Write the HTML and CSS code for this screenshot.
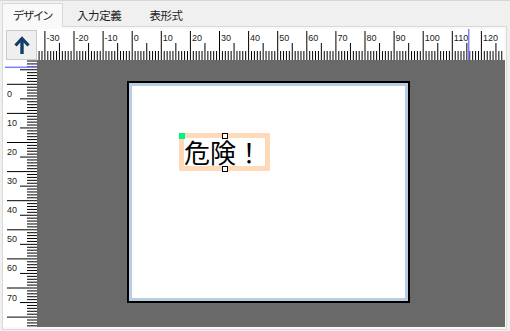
FILE: index.html
```html
<!DOCTYPE html>
<html lang="ja">
<head>
    <meta charset="UTF-8">
    <title>デザイン</title>
    <link rel="stylesheet" href="styles.css">
</head>
<body>
    <div class="window">
        <div class="tabs">
            <div class="tab active">デザイン</div>
            <div class="tab">入力定義</div>
            <div class="tab">表形式</div>
        </div>

        <div class="panel">
            <div class="designer">
                <button class="up-btn" title="上へ">
                    <svg width="16" height="18" viewBox="0 0 16 18">
                        <polyline points="1.5,9.5 8,2.5 14.5,9.5" fill="none" stroke="#123c69" stroke-width="3.2" stroke-linejoin="miter"/>
                        <line x1="8" y1="3" x2="8" y2="18" stroke="#123c69" stroke-width="3.4"/>
                    </svg>
                </button>
                <svg class="ruler ruler-h" id="ruler-h" width="467" height="31"></svg>
                <svg class="ruler ruler-v" id="ruler-v" width="34" height="267"></svg>

                <!-- 用紙 -->
                <div class="canvas">
                    <div class="paper">
                        <div class="sheet">
                            <div class="item">
                                <div class="item-text">危険！</div>
                                <span class="handle anchor"></span>
                                <span class="handle mid-top"></span>
                                <span class="handle mid-bottom"></span>
                            </div>
                        </div>
                    </div>
                </div>
            </div>
        </div>
    </div>

    <script>
        const NS = 'http://www.w3.org/2000/svg';
        const SCALE = 2.91;

        function el(svg, tag, attrs, text) {
            const node = document.createElementNS(NS, tag);
            for (const k in attrs) node.setAttribute(k, attrs[k]);
            if (text) node.textContent = text;
            svg.appendChild(node);
        }

        // horizontal ruler
        const rh = document.getElementById('ruler-h');
        for (let v = -33; v <= 128; v++) {
            const x = 95.2 + v * SCALE;
            if (x < 0 || x > 467) continue;
            let y1 = 22;
            if (v % 10 === 0) y1 = 2;
            else if (v % 5 === 0) y1 = 14;
            el(rh, 'line', { x1: x, y1: y1, x2: x, y2: 31, class: 'tick' });
            if (v % 10 === 0 && x + 14 < 467) el(rh, 'text', { x: x + 1.5, y: 11.5, class: 'label' }, String(v));
        }
        el(rh, 'line', { x1: 431.7, y1: 0, x2: 431.7, y2: 31, class: 'cursor' });

        // vertical ruler
        const rv = document.getElementById('ruler-v');
        for (let v = -9; v <= 83; v++) {
            const y = 24.3 + v * SCALE;
            if (y < 0 || y > 267) continue;
            let x1 = 24;
            if (v % 10 === 0) x1 = 4;
            else if (v % 5 === 0) x1 = 17;
            el(rv, 'line', { x1: x1, y1: y, x2: 34, y2: y, class: 'tick' });
            if (v % 10 === 0 && y + 13 < 267) el(rv, 'text', { x: 4, y: y + 12.5, class: 'label' }, String(v));
        }
        el(rv, 'line', { x1: 2, y1: 7.3, x2: 34, y2: 7.3, class: 'cursor' });
    </script>
</body>
</html>
```

FILE: styles.css
```css
* {
    margin: 0;
    padding: 0;
    box-sizing: border-box;
}

body {
    width: 510px;
    height: 331px;
    overflow: hidden;
    background: #f0f0f0;
    font-family: "Noto Sans CJK JP", "Noto Sans", sans-serif;
    color: #1e1e1e;
}

.window {
    border-top: 1px solid #d6d6d6;
}

.tabs {
    display: flex;
    align-items: flex-start;
    height: 23px;
    margin-top: 2px;
    padding-left: 2px;
}

.tab {
    height: 23px;
    padding: 0 13px;
    border: 1px solid transparent;
    border-bottom: none;
    font-size: 11.5px;
    line-height: 22px;
    letter-spacing: -0.4px;
    font-feature-settings: "palt";
}

.tab.active {
    position: relative;
    z-index: 1;
    width: 61px;
    height: 24px;
    padding: 0;
    text-align: center;
    letter-spacing: -0.8px;
    background: #f9f9f9;
    border-color: #d9d9d9;
}

.panel {
    width: 505px;
    height: 304px;
    margin-left: 2px;
    padding: 2px 1px 2px 0;
    background: #f9f9f9;
    border: 1px solid #d9d9d9;
}

.designer {
    display: grid;
    grid-template-columns: 34px 1fr;
    grid-template-rows: 31px 1fr;
    height: 100%;
}

.up-btn {
    width: 31px;
    height: 30px;
    margin: 1px 0 0 3px;
    display: flex;
    align-items: center;
    justify-content: center;
    background: #efefef;
    border: 1px solid #cbcbcb;
}

.ruler {
    display: block;
    background: #fff;
}

.ruler .tick {
    stroke: #000;
    stroke-width: 1;
}

.ruler .label {
    font-family: "Liberation Sans", Arial, sans-serif;
    font-size: 9px;
    fill: #222;
}

.ruler .cursor {
    stroke: #7f7fff;
    stroke-width: 1.5;
}

.canvas {
    background: #696969;
    padding: 21px 0 0 90px;
    overflow: hidden;
}

.paper {
    width: 283px;
    height: 222px;
    padding: 3px;
    background: #b8cce4;
    border: 2px solid #000;
}

.sheet {
    position: relative;
    height: 100%;
    background: #fff;
}

.item {
    position: absolute;
    left: 47px;
    top: 47px;
    padding: 5px;
    background: #ffdab9;
}

.item-text {
    width: 81px;
    height: 28px;
    background: #fff;
    font-size: 26px;
    line-height: 28px;
    color: #000;
    white-space: nowrap;
}

.handle {
    position: absolute;
    width: 6px;
    height: 6px;
}

.handle.anchor {
    left: 0;
    top: 0;
    background: #00f57f;
}

.handle.mid-top,
.handle.mid-bottom {
    left: 43px;
    background: #fff;
    border: 1px solid #000;
}

.handle.mid-top {
    top: 0;
}

.handle.mid-bottom {
    top: 33px;
}
```
